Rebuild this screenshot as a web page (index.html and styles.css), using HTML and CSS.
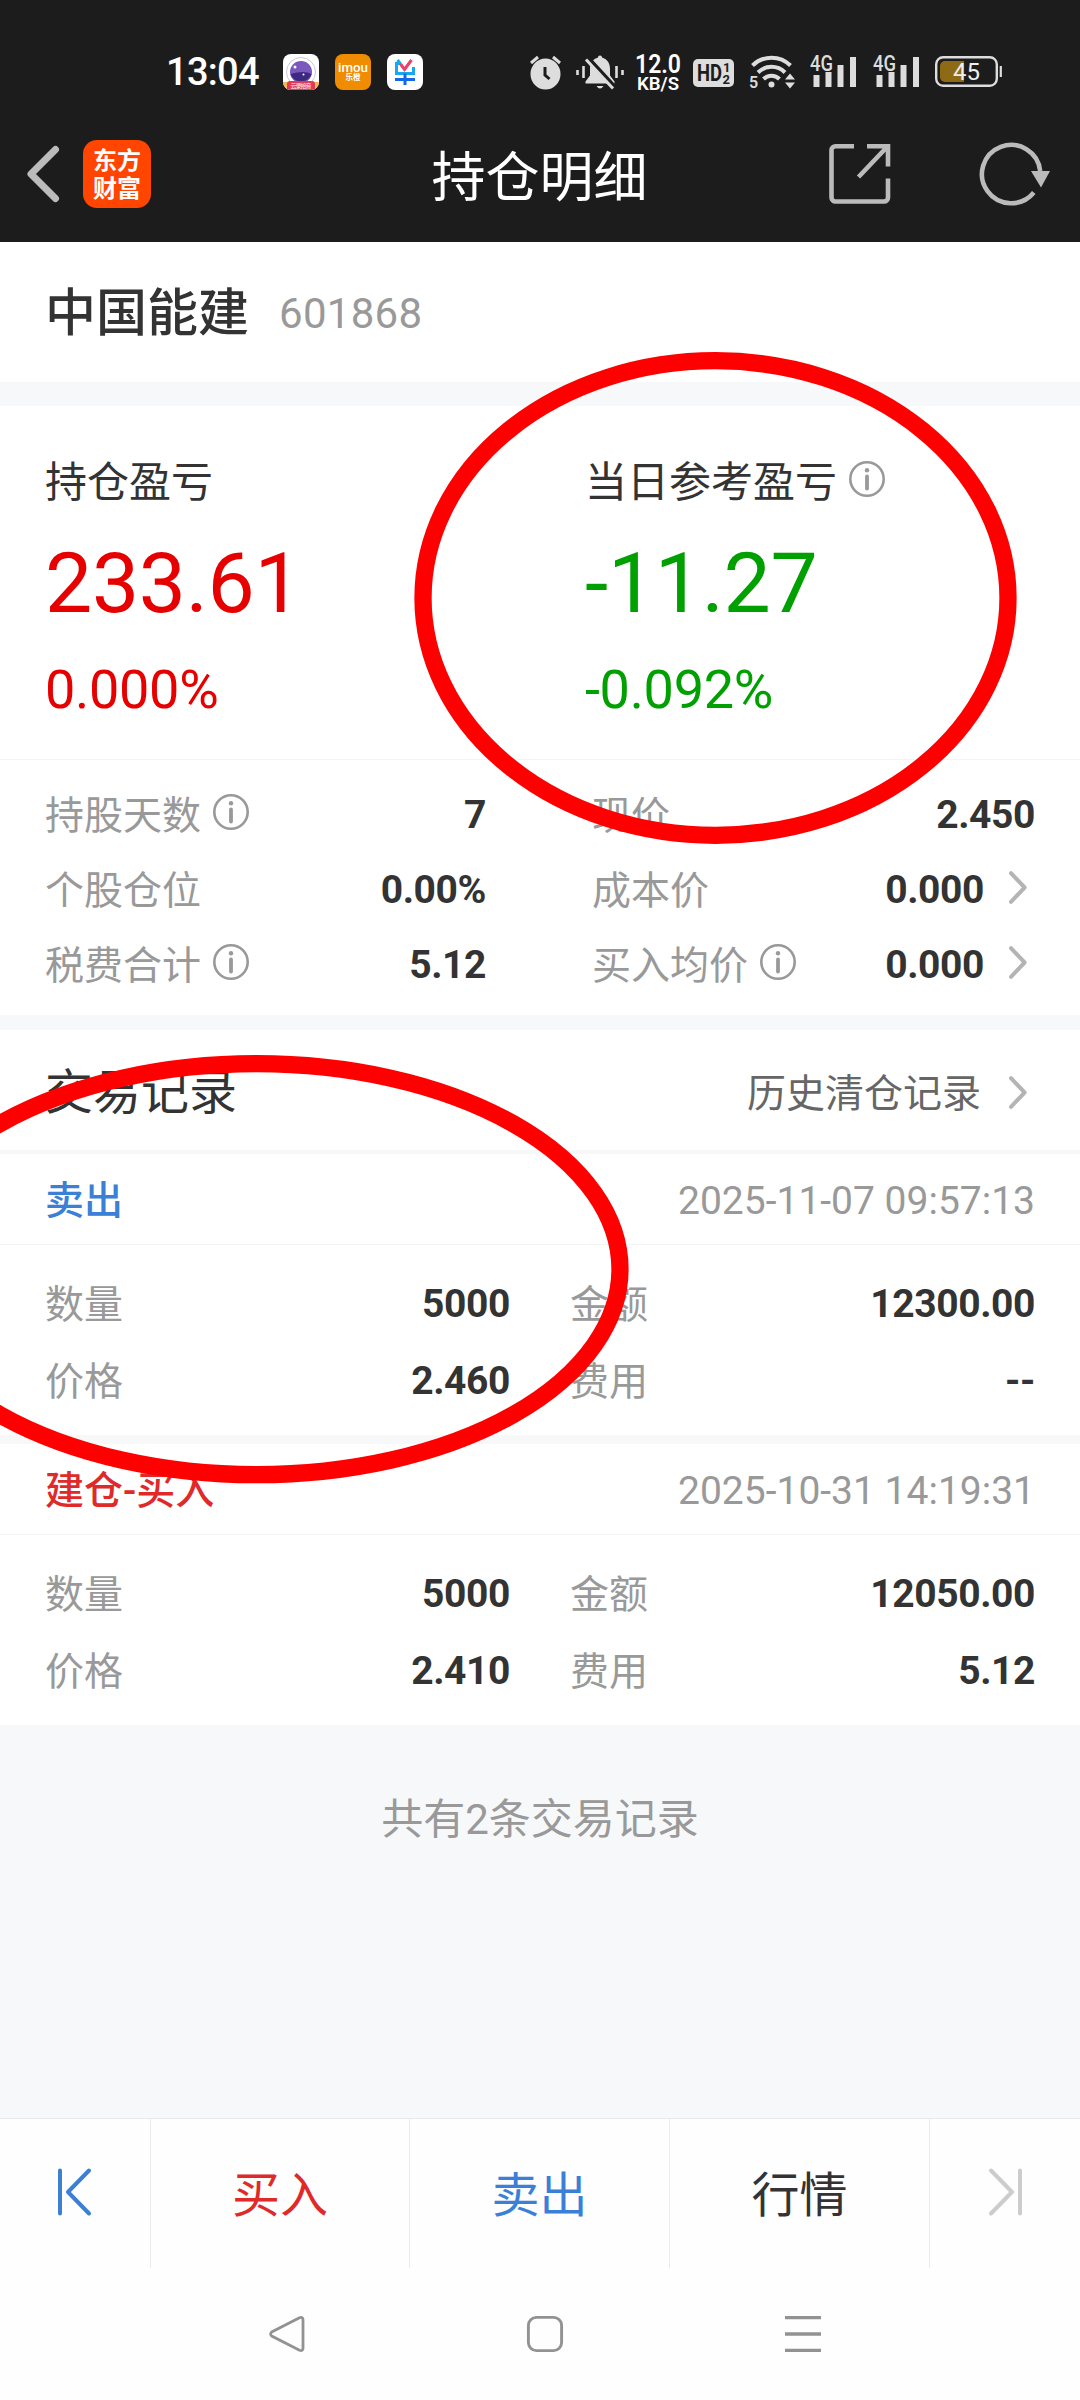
FILE: index.html
```html
<!DOCTYPE html>
<html lang="zh-CN">
<head>
    <meta charset="UTF-8">
    <meta name="viewport" content="width=device-width, initial-scale=1.0">
    <title>持仓明细</title>
    <link rel="stylesheet" href="styles.css">
</head>
<body>
    <!-- Shared icons -->
    <svg class="defs">
        <symbol id="info" viewBox="0 0 36 36">
            <circle cx="18" cy="18" r="16.7" fill="none" stroke="#999" stroke-width="2.6"/>
            <circle cx="18" cy="9.3" r="2.2" fill="#999"/>
            <path d="M18 15.5v12" stroke="#999" stroke-width="3.8" stroke-linecap="round"/>
        </symbol>
        <symbol id="arrow" viewBox="0 0 18 33">
            <path d="M2 2.2L15.6 16.5L2 30.8" fill="none" stroke="#b4b4b4" stroke-width="4" stroke-linecap="round" stroke-linejoin="round"/>
        </symbol>
    </svg>

    <header class="header">
        <div class="status-bar">
            <span class="time">13:04</span>
            <svg class="app" width="36" height="36" viewBox="0 0 36 36">
                <clipPath id="appClip"><rect width="36" height="36" rx="8"/></clipPath>
                <g clip-path="url(#appClip)">
                    <rect width="36" height="36" fill="#fff"/>
                    <circle cx="18" cy="18" r="14.5" fill="none" stroke="#c9c5dc" stroke-width="1"/>
                    <circle cx="18" cy="18" r="11" fill="#7a58bd"/>
                    <path d="M7.5 20a11 11 0 0 0 21 0q-7-4-21 0z" fill="#3b2a80"/>
                    <circle cx="12" cy="13" r="1.5" fill="#fff"/>
                    <circle cx="20.5" cy="20.5" r="1" fill="#fff"/>
                    <rect x="0" y="28" width="36" height="8" fill="#f4b45c"/>
                    <rect x="4" y="27" width="28" height="12" rx="3" fill="#e23a55"/>
                    <text x="7.5" y="34" font-size="6" fill="#fff" textLength="21">云录拾音</text>
                </g>
            </svg>
            <svg class="app" width="36" height="36" viewBox="0 0 36 36">
                <rect width="36" height="36" rx="8" fill="#f08c00"/>
                <text x="3" y="17.5" font-size="12.5" font-weight="500" fill="#fff" textLength="30" lengthAdjust="spacingAndGlyphs">imou</text>
                <text x="10.5" y="25.5" font-size="7.5" font-weight="700" fill="#fff" textLength="15">乐橙</text>
            </svg>
            <svg class="app" width="36" height="36" viewBox="0 0 36 36">
                <rect width="36" height="36" rx="8" fill="#fff"/>
                <path d="M10.5 6l3 4M14 9.5H9.5V19.5H26.5V13" fill="none" stroke="#18a8f0" stroke-width="3"/>
                <path d="M8 25.5H28M18 19.5V31" stroke="#1268e8" stroke-width="3"/>
                <path d="M13.5 10l4 5.5L24.5 6" fill="none" stroke="#e8416c" stroke-width="3"/>
            </svg>

            <svg class="alarm" width="33" height="36" viewBox="0 0 33 36">
                <ellipse cx="16.5" cy="20" rx="15" ry="15.5" fill="#ddd"/>
                <path d="M2 9L9 3M31 9L24 3" stroke="#ddd" stroke-width="3"/>
                <path d="M16 13v8l4.5 4" fill="none" stroke="#1c1c1c" stroke-width="3"/>
            </svg>
            <svg class="mute" width="48" height="36" viewBox="0 0 48 36">
                <path d="M24 1.5c1.5 0 2 1 2 2c5 1.5 8 5.5 8 11v7l4.5 6v2H9.5v-2l4.5-6v-7c0-5.5 3-9.5 8-11c0-1 .5-2 2-2z" fill="#ddd"/>
                <path d="M20.5 32h7q-3.500 5-7 0z" fill="#ddd"/>
                <path d="M11.5 4L40 35" stroke="#1c1c1c" stroke-width="5"/>
                <path d="M10 5.5L37 34.5" stroke="#ddd" stroke-width="3"/>
                <path d="M1.5 16v5M7.500 12v12M40.5 12v12M46.5 16v5" stroke="#ddd" stroke-width="2.6"/>
            </svg>
            <svg class="speed" width="46" height="38" viewBox="0 0 46 38">
                <text x="0" y="18.5" font-size="25" font-weight="600" fill="#fff" textLength="46" lengthAdjust="spacingAndGlyphs">12.0</text>
                <text x="2" y="36" font-size="19" font-weight="600" fill="#fff" textLength="42" lengthAdjust="spacingAndGlyphs">KB/S</text>
            </svg>
            <svg class="hd" width="41" height="36" viewBox="0 0 41 36">
                <rect y="5" width="41" height="28" rx="5" fill="#ddd"/>
                <text x="4" y="27" font-size="23" font-weight="700" fill="#1c1c1c" textLength="25" lengthAdjust="spacingAndGlyphs">HD</text>
                <text x="30" y="18" font-size="13" font-weight="700" fill="#1c1c1c">1</text>
                <text x="29.5" y="30" font-size="13" font-weight="700" fill="#1c1c1c">2</text>
            </svg>
            <svg class="wifi" width="47" height="36" viewBox="0 0 47 36">
                <path d="M3.500 11.500a27 27 0 0 1 38 0M9 18.500a19 19 0 0 1 27 0M14.500 25a11.500 11.500 0 0 1 16 0" fill="none" stroke="#ddd" stroke-width="4"/>
                <circle cx="22.5" cy="30.5" r="3" fill="#ddd"/>
                <text x="0" y="34" font-size="16" font-weight="600" fill="#ddd">5</text>
                <path d="M36 25.500l5-6l5 6zM36 28.500l5 6l5-6z" fill="#ddd"/>
            </svg>
            <svg class="signal" width="47" height="36" viewBox="0 0 47 36">
                <text x="0" y="17" font-size="22" font-weight="500" textLength="23" lengthAdjust="spacingAndGlyphs" fill="#ddd">4G</text>
                <path d="M6.500 21v12M18.500 18v15M30.500 11v22M43 3v30" stroke="#ddd" stroke-width="6"/>
            </svg>
            <svg class="signal" width="47" height="36" viewBox="0 0 47 36">
                <text x="0" y="17" font-size="22" font-weight="500" textLength="23" lengthAdjust="spacingAndGlyphs" fill="#ddd">4G</text>
                <path d="M6.500 21v12M18.500 18v15M30.500 11v22M43 3v30" stroke="#ddd" stroke-width="6"/>
            </svg>
            <svg class="battery" width="68" height="36" viewBox="0 0 68 36">
                <rect x="1.2" y="3.2" width="60.6" height="28.6" rx="7" fill="none" stroke="#ddd" stroke-width="2.4"/>
                <path d="M29 7H10a5 5 0 0 0-5 5V23a5 5 0 0 0 5 5H29z" fill="#8f6a14"/>
                <path d="M65.800 12v11" stroke="#ddd" stroke-width="2.2"/>
                <text x="31.500" y="26" text-anchor="middle" font-size="24" fill="#eee">45</text>
            </svg>
        </div>

        <div class="title-bar">
            <div class="title-left">
                <svg width="33" height="56" viewBox="0 0 33 56">
                    <path d="M28.500 3.500L4 28L28.500 52.500" fill="none" stroke="#bbb" stroke-width="7" stroke-linecap="round" stroke-linejoin="round"/>
                </svg>
                <div class="logo">东方<br>财富</div>
            </div>
            <h1 class="title">持仓明细</h1>
            <div class="title-right">
                <svg width="62" height="62" viewBox="0 0 62 62">
                    <path d="M25 3.200H6.500a4 4 0 0 0-4 4V54.500a4 4 0 0 0 4 4H55a4 4 0 0 0 4-4V35.500M38 3.200H59V23.500M29.500 34L58 4" fill="none" stroke="#bbb" stroke-width="4.600"/>
                </svg>
                <svg class="refresh" width="72" height="66" viewBox="0 0 72 66">
                    <path d="M54.800 51.500A29.200 29.200 0 1 1 61.200 30" fill="none" stroke="#bbb" stroke-width="4.600"/>
                    <path d="M52 30H71L62 46.500z" fill="#bbb"/>
                </svg>
            </div>
        </div>
    </header>

    <section class="stock">
        <h2 class="stock-name">中国能建</h2>
        <span class="stock-code">601868</span>
    </section>

    <!-- Profit and loss -->
    <section class="profit">
        <div class="profit-item up">
            <div class="profit-label"><span>持仓盈亏</span></div>
            <div class="profit-value">233.61</div>
            <div class="profit-rate">0.000%</div>
        </div>
        <div class="profit-item down">
            <div class="profit-label"><span>当日参考盈亏</span><svg class="info"><use href="#info"/></svg></div>
            <div class="profit-value">-11.27</div>
            <div class="profit-rate">-0.092%</div>
        </div>
    </section>

    <section class="detail">
        <div class="cell"><span>持股天数</span><svg class="info"><use href="#info"/></svg><b>7</b></div>
        <div class="cell"><span>现价</span><b>2.450</b></div>
        <div class="cell"><span>个股仓位</span><b>0.00%</b></div>
        <div class="cell"><span>成本价</span><b>0.000</b><svg class="arrow"><use href="#arrow"/></svg></div>
        <div class="cell"><span>税费合计</span><svg class="info"><use href="#info"/></svg><b>5.12</b></div>
        <div class="cell"><span>买入均价</span><svg class="info"><use href="#info"/></svg><b>0.000</b><svg class="arrow"><use href="#arrow"/></svg></div>
    </section>

    <!-- Trade records -->
    <section class="records-head">
        <h3>交易记录</h3>
        <a class="history">历史清仓记录<svg class="arrow"><use href="#arrow"/></svg></a>
    </section>

    <section class="record">
        <div class="record-head">
            <span class="sell">卖出</span>
            <span class="date">2025-11-07 09:57:13</span>
        </div>
        <div class="record-body">
            <div class="cell"><span>数量</span><b>5000</b></div>
            <div class="cell"><span>金额</span><b>12300.00</b></div>
            <div class="cell"><span>价格</span><b>2.460</b></div>
            <div class="cell"><span>费用</span><b>--</b></div>
        </div>
    </section>

    <section class="record">
        <div class="record-head">
            <span class="buy">建仓-买入</span>
            <span class="date">2025-10-31 14:19:31</span>
        </div>
        <div class="record-body">
            <div class="cell"><span>数量</span><b>5000</b></div>
            <div class="cell"><span>金额</span><b>12050.00</b></div>
            <div class="cell"><span>价格</span><b>2.410</b></div>
            <div class="cell"><span>费用</span><b>5.12</b></div>
        </div>
    </section>

    <p class="total">共有2条交易记录</p>

    <footer class="footer">
        <nav class="tabs">
            <div class="tab">
                <svg width="36" height="48" viewBox="0 0 36 48">
                    <path d="M3 2.500V45.500M32 2.500L11 24L32 45.500" fill="none" stroke="#3c80d4" stroke-width="4" stroke-linecap="round" stroke-linejoin="round"/>
                </svg>
            </div>
            <div class="tab buy">买入</div>
            <div class="tab sell">卖出</div>
            <div class="tab">行情</div>
            <div class="tab">
                <svg width="36" height="48" viewBox="0 0 36 48">
                    <path d="M33 2.500V45.500M4 2.500L25 24L4 45.500" fill="none" stroke="#ccc" stroke-width="4" stroke-linecap="round" stroke-linejoin="round"/>
                </svg>
            </div>
        </nav>
        <div class="system-nav">
            <svg width="38" height="38" viewBox="0 0 38 38">
                <path d="M31.500 2.800L3.700 17Q1.500 19 3.700 21L31.500 35.200Q35 36.500 35 33V5Q35 1.500 31.500 2.800z" fill="none" stroke="#929292" stroke-width="2.800"/>
            </svg>
            <svg width="38" height="38" viewBox="0 0 38 38">
                <rect x="2.400" y="2.400" width="33.200" height="33.200" rx="8" fill="none" stroke="#929292" stroke-width="2.900"/>
            </svg>
            <svg width="38" height="38" viewBox="0 0 38 38">
                <path d="M1 2.700H37M1 19H37M1 35.300H37" stroke="#929292" stroke-width="3.300"/>
            </svg>
        </div>
    </footer>

    <!-- Hand-drawn marks over the page -->
    <svg class="marks" viewBox="0 0 1080 2400">
        <ellipse cx="715.500" cy="598" rx="292.500" ry="237.300"/>
        <ellipse cx="256.500" cy="1269.200" rx="363.500" ry="205.500"/>
    </svg>
</body>
</html>
```

FILE: styles.css
```css
/* General Styling */
* {
    box-sizing: border-box;
}

body {
    position: relative;
    display: flex;
    flex-direction: column;
    width: 1080px;
    height: 2400px;
    margin: 0;
    overflow: hidden;
    background-color: #f6f8fa;
    color: #333;
    font-family: Roboto, "Noto Sans CJK SC", sans-serif;
    font-size: 39px;
    line-height: 60px;
}

h1, h2, h3, p {
    margin: 0;
}

svg {
    display: block;
    flex: none;
    overflow: visible;
}

.defs {
    position: absolute;
    width: 0;
    height: 0;
}

.buy {
    color: #e02a2a;
}

.sell {
    color: #3a80d6;
}

/* Header */
.header {
    height: 242px;
    background-color: #1c1c1c;
    color: #fff;
}

.status-bar {
    display: flex;
    height: 106px;
    padding: 54px 0 0 166px;
}

.time {
    width: 101px;
    font-size: 38px;
    font-weight: 500;
    line-height: 36px;
    letter-spacing: -0.7px;
}

.app {
    margin-left: 16px;
}

.alarm {
    margin-left: 106px;
}

.mute {
    margin-left: 14px;
}

.speed {
    margin-left: 11px;
}

.hd {
    margin-left: 12px;
}

.wifi {
    margin-left: 15px;
}

.signal {
    margin-left: 14px;
}

.signal + .signal {
    margin-left: 16px;
}

.battery {
    margin-left: 15px;
}

.title-bar {
    display: flex;
    align-items: center;
    height: 136px;
    padding: 0 29px 0 27px;
}

.title-left, .title-right {
    display: flex;
    flex: 1;
    align-items: center;
}

.title-right {
    justify-content: flex-end;
}

.logo {
    width: 68px;
    height: 68px;
    margin-left: 23px;
    padding-top: 7px;
    border-radius: 14px;
    background-color: #ff4500;
    font-size: 24px;
    font-weight: 700;
    line-height: 28px;
    text-align: center;
}

.title {
    padding: 10px 0 0 1px;
    font-size: 54px;
    font-weight: 400;
    line-height: 72px;
}

.refresh {
    margin-left: 88px;
}

/* Stock */
.stock {
    display: flex;
    align-items: center;
    height: 140px;
    padding: 4px 45px 0;
    margin-bottom: 24px;
    background-color: #fff;
}

.stock-name {
    width: 234px;
    font-size: 51px;
    font-weight: 500;
}

.stock-code {
    color: #999;
    font-size: 42px;
    letter-spacing: 0.3px;
}

/* Profit and loss */
.profit {
    display: grid;
    grid-template-columns: 540px 1fr;
    height: 354px;
    padding: 45px 45px 0;
    border-bottom: 1px solid #f3f4f6;
    background-color: #fff;
}

.profit-label {
    display: flex;
    align-items: center;
    height: 60px;
    font-size: 42px;
}

.profit-label span {
    padding-top: 4px;
}

.profit-label .info {
    margin: -4px 0 0 12px;
}

.profit-value {
    margin-top: 23px;
    font-size: 84px;
    line-height: 100px;
    letter-spacing: -0.3px;
}

.profit-rate {
    margin-top: 26px;
    font-size: 54px;
    letter-spacing: -0.3px;
}

.up .profit-value, .up .profit-rate {
    color: #e60000;
}

.down .profit-value, .down .profit-rate {
    color: #00a000;
}

/* Label and value cells */
.cell {
    display: flex;
    align-items: center;
}

.cell span {
    padding-top: 2px;
    color: #999;
}

.cell b {
    margin-left: auto;
    font-weight: 700;
    letter-spacing: -0.4px;
}

.info {
    width: 36px;
    height: 36px;
}

.cell .info {
    margin: -5px 0 0 12px;
}

.arrow {
    width: 18px;
    height: 33px;
    margin: -5px 8px 0 25px;
}

.detail {
    display: grid;
    grid-template-columns: 441px 443px;
    grid-auto-rows: 75px;
    column-gap: 106px;
    height: 255px;
    padding: 17px 45px 0;
    margin-bottom: 15px;
    background-color: #fff;
}

/* Trade records */
.records-head {
    display: flex;
    align-items: center;
    justify-content: space-between;
    height: 120px;
    padding: 6px 45px 0;
    margin-bottom: 4px;
    background-color: #fff;
}

.records-head h3 {
    font-size: 48px;
    font-weight: 400;
}

.history {
    display: flex;
    align-items: center;
    padding-top: 2px;
    color: #666;
}

.history .arrow {
    margin: -4px 8px 0 28px;
}

.record {
    height: 281px;
    background-color: #fff;
}

.record + .record {
    margin-top: 9px;
}

.record-head {
    display: flex;
    align-items: center;
    justify-content: space-between;
    height: 91px;
    padding: 4px 45px 0;
    border-bottom: 1px solid #f3f4f6;
    font-weight: 500;
}

.date {
    color: #999;
    font-weight: 400;
}

.record-body {
    display: grid;
    grid-template-columns: 465px 465px;
    grid-auto-rows: 77px;
    column-gap: 60px;
    padding: 20px 45px 0;
}

.total {
    margin-top: 65px;
    color: #999;
    font-size: 42px;
    text-align: center;
}

/* Footer */
.footer {
    height: 282px;
    margin-top: auto;
    border-top: 1px solid #e9e9e9;
    background-color: #fefefe;
}

.tabs {
    display: grid;
    grid-template-columns: 151px 259px 260px 260px 150px;
    height: 149px;
}

.tab {
    display: flex;
    align-items: center;
    justify-content: center;
    padding-top: 4px;
    border-right: 1px solid #ebebeb;
    font-size: 48px;
}

.tab:last-child {
    border-right: none;
}

.tab svg {
    margin-top: -8px;
}

.system-nav {
    display: flex;
    justify-content: space-between;
    padding: 47px 258px 0 268px;
}

/* Marks */
.marks {
    position: absolute;
    top: 0;
    left: 0;
    width: 1080px;
    height: 2400px;
    fill: none;
    stroke: #f00;
    stroke-width: 17.3px;
    pointer-events: none;
}
```
